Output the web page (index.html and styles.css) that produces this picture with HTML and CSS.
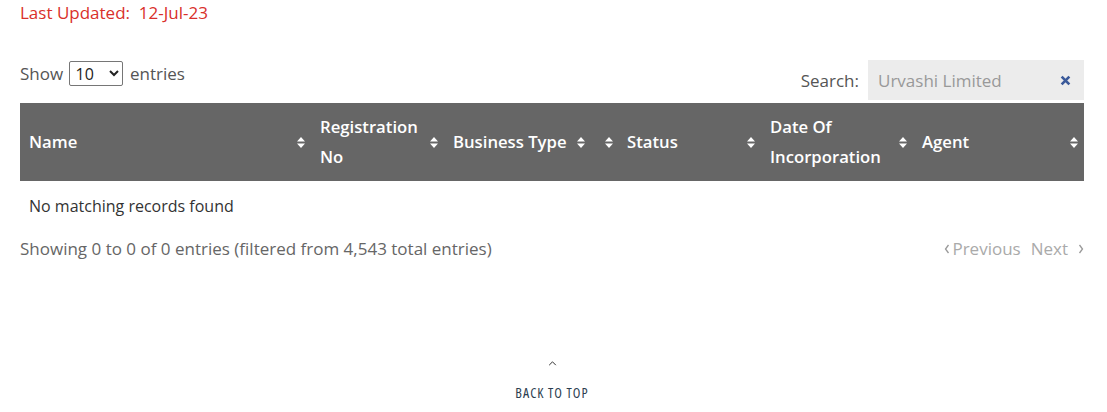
FILE: index.html
```html
<html lang="en">
<head>
    <meta charset="UTF-8">
    <title>Companies</title>
    <link rel="stylesheet" href="styles.css">
</head>
<body>

<p class="updated">Last Updated:&nbsp; 12-Jul-23</p>

<div class="toolbar">
    <label class="length">Show
        <select>
            <option>10</option>
            <option>25</option>
            <option>50</option>
            <option>100</option>
        </select>
        entries</label>
    <label class="search">Search:
        <span class="search-box">
            <input type="text" placeholder="Urvashi Limited">
            <svg class="clear" viewBox="0 0 10 10"><path d="M1.5 1.5 8.5 8.5M8.5 1.5 1.5 8.5"/></svg>
        </span>
    </label>
</div>

<table class="grid">
    <colgroup>
        <col style="width: 291px">
        <col style="width: 133px">
        <col style="width: 147px">
        <col style="width: 170px">
        <col style="width: 152px">
        <col style="width: 171px">
    </colgroup>
    <thead>
    <tr>
        <th><div class="th"><span>Name</span><svg class="sort" viewBox="0 0 8 11"><path d="M4 0 8 4.5H0Z M0 6.5H8L4 11Z"/></svg></div></th>
        <th><div class="th"><span>Registration No</span><svg class="sort" viewBox="0 0 8 11"><path d="M4 0 8 4.5H0Z M0 6.5H8L4 11Z"/></svg></div></th>
        <th><div class="th"><span>Business Type</span><svg class="sort" viewBox="0 0 8 11"><path d="M4 0 8 4.5H0Z M0 6.5H8L4 11Z"/></svg></div></th>
        <th><div class="th"><svg class="sort lead" viewBox="0 0 8 11"><path d="M4 0 8 4.5H0Z M0 6.5H8L4 11Z"/></svg><span>Status</span><svg class="sort" viewBox="0 0 8 11"><path d="M4 0 8 4.5H0Z M0 6.5H8L4 11Z"/></svg></div></th>
        <th><div class="th"><span>Date Of Incorporation</span><svg class="sort" viewBox="0 0 8 11"><path d="M4 0 8 4.5H0Z M0 6.5H8L4 11Z"/></svg></div></th>
        <th><div class="th"><span>Agent</span><svg class="sort" viewBox="0 0 8 11"><path d="M4 0 8 4.5H0Z M0 6.5H8L4 11Z"/></svg></div></th>
    </tr>
    </thead>
    <tbody>
    <tr>
        <td colspan="6" class="empty">No matching records found</td>
    </tr>
    </tbody>
</table>

<div class="footer">
    <div class="info">Showing 0 to 0 of 0 entries (filtered from 4,543 total entries)</div>
    <div class="paging">
        <a class="page prev"><svg viewBox="0 0 6 10"><path d="M4.5 1 1.5 5 4.5 9"/></svg>Previous</a>
        <a class="page next">Next<svg viewBox="0 0 6 10"><path d="M1.5 1 4.5 5 1.5 9"/></svg></a>
    </div>
</div>

<a class="back-top" href="#">
    <svg viewBox="0 0 10 6"><path d="M1 5 5 1 9 5"/></svg>
    <span>BACK TO TOP</span>
</a>

</body>
</html>
```

FILE: styles.css
```css
body {
    font-family: "Open Sans", "Noto Sans", sans-serif;
    font-size: 17px;
    color: #333333;
    background-color: #FFFFFF;
    margin: 0;
    padding: 0 23px 0 20px;
}

.updated {
    margin: 0;
    padding-top: 1px;
    line-height: 24px;
    color: #D9302A;
}

.toolbar {
    display: flex;
    justify-content: space-between;
    align-items: flex-start;
    margin-top: 35px;
}

.length {
    color: #555555;
    line-height: 25px;
    margin-top: 1px;
}

.length select {
    font-family: "Open Sans", "Noto Sans", sans-serif;
    font-size: 16px;
    height: 25px;
    width: 54px;
    margin: 0 3px 0 1px;
    padding: 0 2px;
    color: #222222;
    border: 1px solid #767676;
    border-radius: 2px;
    background-color: #FFFFFF;
}

.search {
    display: flex;
    align-items: center;
    color: #555555;
}

.search-box {
    display: flex;
    align-items: center;
    width: 216px;
    height: 40px;
    margin-left: 9px;
    background-color: #ECECEC;
    box-sizing: border-box;
    padding: 0 13px 0 10px;
}

.search-box input {
    flex: 1;
    min-width: 0;
    border: none;
    outline: none;
    background: transparent;
    font-family: "Open Sans", "Noto Sans", sans-serif;
    font-size: 17px;
    padding: 0;
}

.search-box input::placeholder {
    color: #999999;
}

.clear {
    width: 11px;
    height: 11px;
    fill: none;
    stroke: #3B5A9A;
    stroke-width: 2.4;
}

.grid {
    width: 100%;
    margin-top: 3px;
    border-collapse: collapse;
    table-layout: fixed;
}

.grid th {
    background-color: #666666;
    color: #FFFFFF;
    font-weight: 600;
    font-size: 16.7px;
    text-align: left;
    line-height: 30px;
    padding: 9px 6px 9px 9px;
    vertical-align: middle;
}

.th {
    display: flex;
    align-items: center;
    justify-content: space-between;
    gap: 8px;
}

.sort {
    flex: none;
    width: 8px;
    height: 11px;
    fill: #FFFFFF;
}

.sort.lead {
    margin-left: 5px;
    margin-right: 6px;
}

.th .lead + span {
    margin-right: auto;
}

.grid td.empty {
    padding: 13px 9px;
    line-height: 24px;
    color: #333333;
}

.footer {
    display: flex;
    justify-content: space-between;
    align-items: center;
    margin-top: 6px;
    line-height: 24px;
}

.info {
    color: #666666;
}

.paging {
    display: flex;
    gap: 10px;
}

.page {
    display: flex;
    align-items: center;
    color: #AAAAAA;
    text-decoration: none;
}

.page svg {
    width: 6px;
    height: 10px;
    fill: none;
    stroke: #999999;
    stroke-width: 1.3;
}

.prev svg {
    margin-right: 2px;
}

.next svg {
    margin-left: 10px;
}

.back-top {
    display: flex;
    flex-direction: column;
    align-items: center;
    width: 120px;
    margin: 100px auto 0;
    text-decoration: none;
    color: #2C3E50;
}

.back-top svg {
    width: 9px;
    height: 5px;
    fill: none;
    stroke: #333333;
    stroke-width: 1.2;
}

.back-top span {
    margin-top: 17px;
    font-family: "Open Sans", "Roboto", sans-serif;
    font-stretch: 75%;
    font-weight: 500;
    font-size: 14px;
    letter-spacing: 1px;
}
```
